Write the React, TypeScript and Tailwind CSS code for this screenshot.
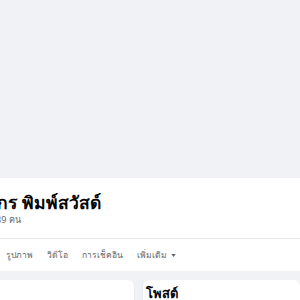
export default function App() {
  const tabs = ['รูปภาพ', 'วิดีโอ', 'การเช็คอิน']
  return (
    <div className="w-[300px] h-[300px] overflow-hidden bg-[#f0f2f5]" style={{ fontFamily: '"Noto Sans", "Liberation Sans", sans-serif' }}>
      {/* cover */}
      <div className="h-[178px] bg-[#f0f2f5]" />
      {/* header */}
      <div className="bg-white">
        <div className="h-[61px] border-b border-[#e4e6eb] pt-[12px]">
          <h1 className="-ml-[37px] text-[17.5px] leading-[24px] font-bold text-[#050505] whitespace-nowrap">ชนากร พิมพ์สวัสด์</h1>
          <p className="-ml-[39px] text-[9px] leading-[12px] text-[#65676b] whitespace-nowrap">เพื่อน 1,239 คน</p>
        </div>
        <div className="h-[32px] flex items-center gap-[14px] pl-[6px] text-[8.5px] text-[#65676b] font-medium">
          {tabs.map(t => (
            <span key={t}>{t}</span>
          ))}
          <span className="flex items-center gap-[4px]">
            เพิ่มเติม
            <svg width="5" height="3" viewBox="0 0 6 4"><path d="M0 0h6L3 4z" fill="#65676b" /></svg>
          </span>
        </div>
      </div>
      {/* content */}
      <div className="flex gap-[9px] pt-[9px] -ml-[10px]">
        <div className="w-[144px] h-[60px] bg-white rounded-[6px] shadow-[0_1px_2px_rgba(0,0,0,0.1)]" />
        <div className="flex-1 h-[60px] bg-white rounded-[6px] shadow-[0_1px_2px_rgba(0,0,0,0.1)] pl-[3px] pt-[4px]">
          <h2 className="text-[13px] leading-[18px] font-bold text-[#050505]">โพสต์</h2>
        </div>
      </div>
    </div>
  )
}
